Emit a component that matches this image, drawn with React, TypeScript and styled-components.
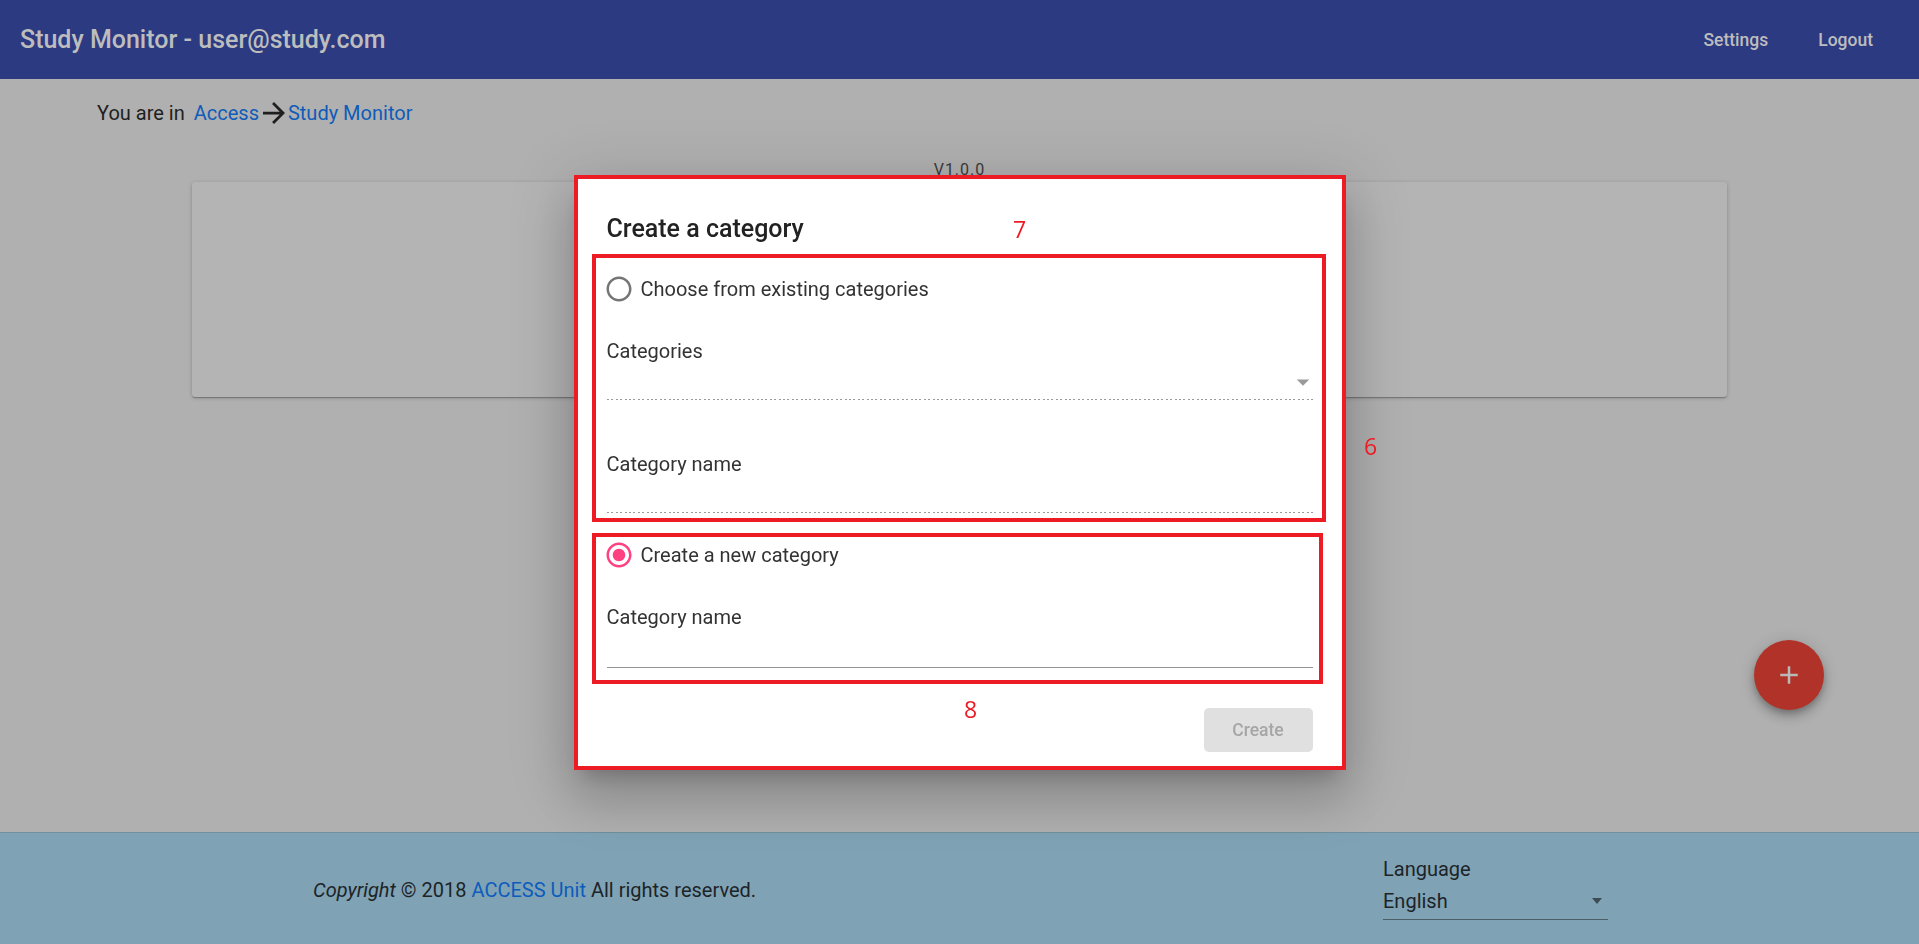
import React from 'react';
import styled, { createGlobalStyle } from 'styled-components';

const GlobalStyle = createGlobalStyle`
  html, body {
    margin: 0;
    padding: 0;
    font-family: Roboto, "Liberation Sans", Arial, sans-serif;
    background: #b0b0b0;
  }
  * {
    box-sizing: border-box;
  }
`;

const Page = styled.div`
  min-height: 100vh;
  display: flex;
  flex-direction: column;
`;

const Header = styled.header`
  height: 79px;
  flex-shrink: 0;
  background: #2c3a82;
  display: flex;
  align-items: center;
  justify-content: space-between;
  padding: 0 46px 0 20px;
`;

const AppTitle = styled.h1`
  margin: 0;
  font-size: 25px;
  font-weight: 500;
  color: #bdbdbd;
`;

const Nav = styled.nav`
  display: flex;
  gap: 50px;
`;

const NavButton = styled.button`
  border: none;
  background: none;
  padding: 0;
  font-family: inherit;
  font-size: 17.5px;
  font-weight: 500;
  color: #bdbdbd;
  cursor: pointer;
`;

const Main = styled.main`
  flex: 1;
  padding-top: 22px;
`;

const Breadcrumb = styled.div`
  margin-left: 97px;
  display: flex;
  align-items: center;
  font-size: 20px;
  line-height: 24px;
  color: #1f1f1f;
`;

const Crumb = styled.a<{ $gap?: number }>`
  color: #0f5cb9;
  text-decoration: none;
  margin-left: ${({ $gap }) => $gap ?? 0}px;
`;

const Arrow = styled.svg`
  width: 22px;
  height: 22px;
  margin: 0 3px 0 4px;
  fill: #1f1f1f;
`;

const Version = styled.div`
  margin-top: 33px;
  text-align: center;
  font-size: 16px;
  line-height: 24px;
  letter-spacing: 1px;
  color: #3a3a3a;
`;

const Card = styled.div`
  margin: 0 192px;
  height: 215px;
  background: #b4b4b4;
  border-radius: 3px;
  box-shadow: 0 1px 4px rgba(0, 0, 0, 0.2), 0 1px 1px rgba(0, 0, 0, 0.14),
    0 2px 1px -1px rgba(0, 0, 0, 0.12);
`;

const Footer = styled.footer`
  height: 112px;
  flex-shrink: 0;
  background: #7fa3b5;
  border-top: 1px solid #71909f;
  display: flex;
  align-items: center;
  justify-content: space-between;
  padding: 0 311px 0 313px;
  font-size: 20px;
  color: #1d2428;
`;

const Copyright = styled.div`
  line-height: 24px;
  margin-top: 3px;
  em {
    font-style: italic;
  }
`;

const FooterLink = styled.a`
  color: #0d5cbd;
  text-decoration: none;
`;

const LanguageSelect = styled.div`
  width: 225px;
  display: flex;
  flex-direction: column;
  border-bottom: 1px solid #4a5f69;
  padding-bottom: 6px;
`;

const LanguageLabel = styled.div`
  line-height: 24px;
  margin-bottom: 8px;
`;

const LanguageValue = styled.div`
  display: flex;
  align-items: center;
  justify-content: space-between;
  line-height: 24px;
  padding-right: 6px;
`;

const Fab = styled.button`
  position: fixed;
  right: 95px;
  top: 640px;
  width: 70px;
  height: 70px;
  border-radius: 50%;
  border: none;
  background: #b03228;
  display: flex;
  align-items: center;
  justify-content: center;
  box-shadow: 0 4px 6px -1px rgba(0, 0, 0, 0.2), 0 7px 12px 1px rgba(0, 0, 0, 0.14),
    0 2px 16px 1px rgba(0, 0, 0, 0.12);
  svg {
    width: 30px;
    height: 30px;
    fill: #b9b9b9;
  }
`;

const Backdrop = styled.div`
  position: fixed;
  inset: 0;
  display: flex;
  align-items: center;
  justify-content: center;
`;

const Dialog = styled.div`
  position: relative;
  width: 772px;
  background: #fff;
  border: 4px solid #ed1c24;
  box-shadow: 0 14px 19px -9px rgba(0, 0, 0, 0.2), 0 30px 48px 4px rgba(0, 0, 0, 0.14),
    0 11px 58px 10px rgba(0, 0, 0, 0.12);
  display: flex;
  flex-direction: column;
`;

const DialogTitle = styled.h2`
  margin: 0;
  padding: 30px 0 0 29px;
  font-size: 25px;
  font-weight: 500;
  line-height: 40px;
  color: #222;
`;

const Sections = styled.div`
  margin-top: 5px;
  padding: 0 16px 0 14px;
  display: flex;
  flex-direction: column;
  gap: 11px;
`;

const Section = styled.section<{ $top: number; $bottom: number; $trim?: number }>`
  border: 4px solid #ed1c24;
  padding: ${({ $top, $bottom, $trim = 0 }) => `${$top}px ${9 - $trim}px ${$bottom}px 11px`};
  margin-right: ${({ $trim }) => $trim ?? 0}px;
  display: flex;
  flex-direction: column;
`;

const RadioRow = styled.label`
  height: 36px;
  display: flex;
  align-items: center;
  gap: 7px;
  margin-left: -3px;
  font-size: 20px;
  color: #333;
  cursor: pointer;
`;

const RadioIcon = styled.svg<{ $checked?: boolean }>`
  width: 30px;
  height: 30px;
  fill: ${({ $checked }) => ($checked ? '#ff4081' : '#757575')};
`;

const Field = styled.div<{ $gap: number }>`
  margin-top: ${({ $gap }) => $gap}px;
  display: flex;
  flex-direction: column;
`;

const FieldLabel = styled.div`
  font-size: 20px;
  line-height: 24px;
  color: #333;
`;

const InputRow = styled.div<{ $height: number }>`
  height: ${({ $height }) => $height}px;
  display: flex;
  justify-content: flex-end;
  align-items: flex-start;
`;

const DropArrow = styled.svg`
  width: 30px;
  height: 30px;
  margin-top: 4px;
  margin-right: -5px;
  fill: #9a9a9a;
`;

const Underline = styled.div<{ $dotted?: boolean }>`
  height: 1px;
  background: ${({ $dotted }) =>
    $dotted
      ? 'repeating-linear-gradient(to right, #9a9a9a 0 2px, transparent 2px 4.4px)'
      : '#949494'};
`;

const Actions = styled.div`
  margin-top: 24px;
  padding: 0 29px 14px 0;
  display: flex;
  justify-content: flex-end;
`;

const CreateButton = styled.button`
  width: 109px;
  height: 44px;
  border: none;
  border-radius: 5px;
  background: #e0e0e0;
  color: #a6a6a6;
  font-family: inherit;
  font-size: 17.5px;
  font-weight: 500;
`;

const Annotation = styled.span<{ $x: number; $y: number }>`
  position: absolute;
  left: ${({ $x }) => $x}px;
  top: ${({ $y }) => $y}px;
  transform: translate(-50%, -50%);
  font-family: "Open Sans", "Liberation Sans", sans-serif;
  font-size: 23px;
  line-height: 1;
  color: #ed1c24;
`;

const UNCHECKED =
  'M12 2C6.48 2 2 6.48 2 12s4.48 10 10 10 10-4.48 10-10S17.52 2 12 2zm0 18c-4.42 0-8-3.58-8-8s3.58-8 8-8 8 3.58 8 8-3.58 8-8 8z';
const CHECKED =
  'M12 7c-2.76 0-5 2.24-5 5s2.24 5 5 5 5-2.24 5-5-2.24-5-5-5zm0-5C6.48 2 2 6.48 2 12s4.48 10 10 10 10-4.48 10-10S17.52 2 12 2zm0 18c-4.42 0-8-3.58-8-8s3.58-8 8-8 8 3.58 8 8-3.58 8-8 8z';

function Radio({ checked, label }: { checked?: boolean; label: string }) {
  return (
    <RadioRow>
      <RadioIcon $checked={checked} viewBox="0 0 24 24">
        <path d={checked ? CHECKED : UNCHECKED} />
      </RadioIcon>
      {label}
    </RadioRow>
  );
}

export default function App() {
  return (
    <Page>
      <GlobalStyle />
      <Header>
        <AppTitle>Study Monitor - user@study.com</AppTitle>
        <Nav>
          <NavButton>Settings</NavButton>
          <NavButton>Logout</NavButton>
        </Nav>
      </Header>

      <Main>
        <Breadcrumb>
          You are in
          <Crumb $gap={9}>Access</Crumb>
          <Arrow viewBox="4 4 16 16">
            <path d="M12 4l-1.41 1.41L16.17 11H4v2h12.17l-5.58 5.59L12 20l8-8z" />
          </Arrow>
          <Crumb>Study Monitor</Crumb>
        </Breadcrumb>
        <Version>V1.0.0</Version>
        <Card />
      </Main>

      <Footer>
        <Copyright>
          <em>Copyright</em> © 2018 <FooterLink>ACCESS Unit</FooterLink> All rights reserved.
        </Copyright>
        <LanguageSelect>
          <LanguageLabel>Language</LanguageLabel>
          <LanguageValue>
            English
            <svg width="10" height="6" viewBox="0 0 10 6">
              <path d="M0 0h10L5 6z" fill="#3d4b53" />
            </svg>
          </LanguageValue>
        </LanguageSelect>
      </Footer>

      <Fab>
        <svg viewBox="0 0 24 24">
          <path d="M19 13h-6v6h-2v-6H5v-2h6V5h2v6h6v2z" />
        </svg>
      </Fab>

      <Backdrop>
        <Dialog>
          <DialogTitle>Create a category</DialogTitle>
          <Sections>
            <Section $top={13} $bottom={5}>
              <Radio label="Choose from existing categories" />
              <Field $gap={32}>
                <FieldLabel>Categories</FieldLabel>
                <InputRow $height={36}>
                  <DropArrow viewBox="0 0 24 24">
                    <path d="M7 10l5 5 5-5z" />
                  </DropArrow>
                </InputRow>
                <Underline $dotted />
              </Field>
              <Field $gap={52}>
                <FieldLabel>Category name</FieldLabel>
                <InputRow $height={36} />
                <Underline $dotted />
              </Field>
            </Section>
            <Section $top={0} $bottom={12} $trim={3}>
              <Radio checked label="Create a new category" />
              <Field $gap={32}>
                <FieldLabel>Category name</FieldLabel>
                <InputRow $height={38} />
                <Underline />
              </Field>
            </Section>
          </Sections>
          <Actions>
            <CreateButton disabled>Create</CreateButton>
          </Actions>
          <Annotation $x={442} $y={50}>7</Annotation>
          <Annotation $x={793} $y={267}>6</Annotation>
          <Annotation $x={393} $y={530}>8</Annotation>
        </Dialog>
      </Backdrop>
    </Page>
  );
}
